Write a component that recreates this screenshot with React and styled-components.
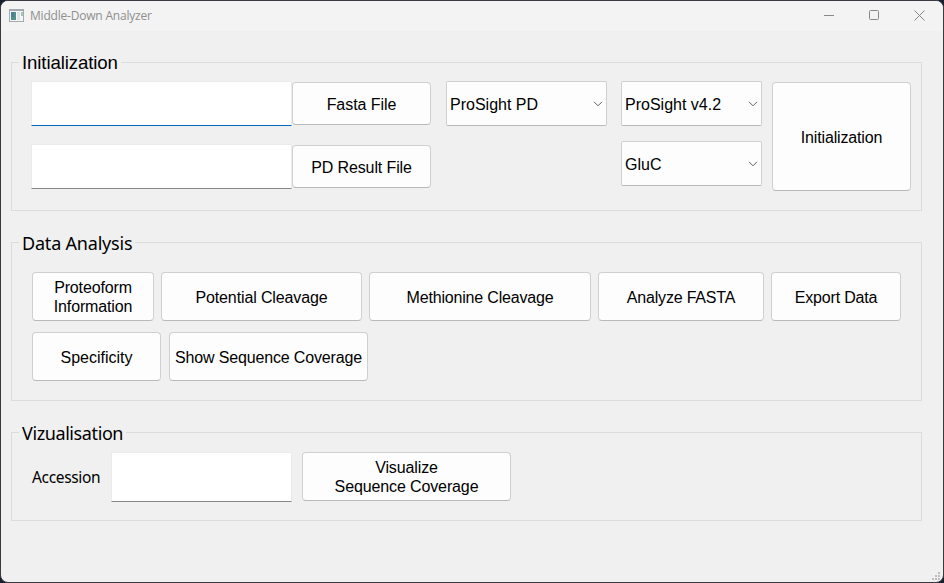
import React from "react";
import styled, { createGlobalStyle } from "styled-components";

const Global = createGlobalStyle`
  * { box-sizing: border-box; }
  body { margin: 0; background: #1c2430; }
`;

const Desktop = styled.div`
  width: 944px;
  height: 583px;
  background: #17202c;
  overflow: hidden;
`;

const Window = styled.main`
  position: relative;
  width: 944px;
  height: 583px;
  border: 1px solid #3a3a40;
  border-radius: 8px;
  overflow: hidden;
  background: #f0f0f0;
  color: #000;
  font: 16px/19px "Liberation Sans", Arial, sans-serif;
`;

const TitleBar = styled.header`
  display: flex;
  align-items: center;
  height: 30px;
  padding: 0 18px 1px 8px;
  background: #f3f3f3;
`;

const WindowTitle = styled.h1`
  flex: 1;
  margin: 1px 0 0 6px;
  font: 400 12px/16px "Open Sans", sans-serif;
  letter-spacing: -0.2px;
  color: #8f8f8f;
`;

const Controls = styled.div`
  display: flex;
  gap: 34px;
`;

const Body = styled.div`
  display: flex;
  flex-direction: column;
  gap: 31px;
  width: 911px;
  margin: 31px 0 0 10px;
`;

const Group = styled.section`
  height: ${(p) => p.$h}px;
  border: 1px solid #dcdcdc;
`;

const GroupTitle = styled.h2`
  width: max-content;
  height: 22px;
  margin: -11px 0 0 7px;
  padding: 0 3px;
  background: #f0f0f0;
  white-space: nowrap;
  font: 400 ${(p) => p.$size}px/22px ${(p) => p.$font}, sans-serif;
  letter-spacing: ${(p) => p.$tracking || 0}px;
`;

const Row = styled.div`
  display: flex;
  align-items: flex-start;
  margin: ${(p) => p.$m};
`;

const Stack = styled.div`
  display: flex;
  flex-direction: column;
  gap: ${(p) => p.$gap}px;
  margin: ${(p) => p.$m};
`;

const Button = styled.button`
  flex: none;
  width: ${(p) => p.$w}px;
  height: ${(p) => p.$h}px;
  margin: 0 0 0 ${(p) => p.$ml || 0}px;
  padding: 1px 0 0;
  border: 1px solid #d0d0d0;
  border-bottom-color: #b9b9b9;
  border-radius: 4px;
  background: #fdfdfd;
  color: #000;
  font: inherit;
  letter-spacing: ${(p) => p.$tracking || 0}px;
  white-space: pre;
`;

const Input = styled.input`
  flex: none;
  width: ${(p) => p.$w}px;
  height: ${(p) => p.$h}px;
  margin: 0 0 0 ${(p) => p.$ml || 0}px;
  border: 1px solid #ebebeb;
  border-bottom-color: ${(p) => (p.$active ? "#0067c0" : "#868686")};
  border-radius: 1px;
  background: #fff;
  outline: none;
`;

const Combo = styled.div`
  display: flex;
  align-items: center;
  justify-content: space-between;
  width: ${(p) => p.$w}px;
  height: 45px;
  padding: 1px 3px 0;
  border: 1px solid #d0d0d0;
  border-bottom-color: #b9b9b9;
  border-radius: 2px;
  background: #fdfdfd;
`;

const Label = styled.label`
  width: 80px;
  margin-top: 14px;
  padding-left: 1px;
  font: 15.5px/22px "Noto Sans", sans-serif;
  letter-spacing: -0.35px;
`;

const Grip = styled.svg`
  position: absolute;
  right: 3px;
  bottom: 2px;
`;

const AppIcon = () => (
  <svg width="15" height="13" viewBox="0 0 15 13" shapeRendering="crispEdges">
    <path d="M0 0h15v13H0z" fill="#a4a9ac" />
    <path d="M1 2h13v10H1z" fill="#f4f6f8" />
    <path d="M2 3h5v8H2z" fill="#4f9385" />
    <path d="M2 3h3v5H2z" fill="#4d7f9c" />
    <path d="M8 3h3v8H8z" fill="#dfe4e6" />
    <path d="M12 3h2v4h-2z" fill="#9cc8b0" />
  </svg>
);

const Select = ({ w, children }) => (
  <Combo $w={w}>
    <span>{children}</span>
    <svg width="10" height="6" viewBox="0 0 10 6">
      <path d="M1 .8l4 4 4-4" fill="none" stroke="#606060" />
    </svg>
  </Combo>
);

export default function App() {
  return (
    <Desktop>
      <Global />
      <Window>
        <TitleBar>
          <AppIcon />
          <WindowTitle>Middle-Down Analyzer</WindowTitle>
          <Controls>
            <svg width="11" height="11"><path d="M0 5.5h10" stroke="#888" /></svg>
            <svg width="11" height="11"><rect x=".5" y=".5" width="9" height="9" rx="1" fill="none" stroke="#888" /></svg>
            <svg width="11" height="11"><path d="M.5.5l10 10m0-10l-10 10" stroke="#888" /></svg>
          </Controls>
        </TitleBar>
        <Body>
          <Group $h={149}>
            <GroupTitle $size={18.67} $tracking={-0.12} $font='"Liberation Sans"'>Initialization</GroupTitle>
            <Row $m="7px 0 0 19px">
              <Stack $gap={18}>
                <Input $w={261} $h={45} $active aria-label="Fasta path" />
                <Input $w={261} $h={45} aria-label="Result path" />
              </Stack>
              <Stack $gap={20} $m="1px 0 0 0">
                <Button $w={139} $h={43} $tracking={-0.05}>Fasta File</Button>
                <Button $w={139} $h={43} $tracking={-0.12}>PD Result File</Button>
              </Stack>
              <Stack $m="0 0 0 15px"><Select w={161}>ProSight PD</Select></Stack>
              <Stack $gap={15} $m="0 0 0 14px">
                <Select w={141}>ProSight v4.2</Select>
                <Select w={141}>GluC</Select>
              </Stack>
              <Stack $m="1px 0 0 10px"><Button $w={139} $h={109} $tracking={-0.15}>Initialization</Button></Stack>
            </Row>
          </Group>
          <Group $h={159}>
            <GroupTitle $size={18} $tracking={-0.2} $font='"Noto Sans"'>Data Analysis</GroupTitle>
            <Row $m="18px 0 0 20px">
              <Button $w={122} $h={49} $tracking={-0.15}>{"Proteoform\nInformation"}</Button>
              <Button $w={201} $h={49} $ml={7} $tracking={-0.12}>Potential Cleavage</Button>
              <Button $w={222} $h={49} $ml={7} $tracking={-0.18}>Methionine Cleavage</Button>
              <Button $w={166} $h={49} $ml={7} $tracking={-0.2}>Analyze FASTA</Button>
              <Button $w={130} $h={49} $ml={7} $tracking={-0.2}>Export Data</Button>
            </Row>
            <Row $m="11px 0 0 20px">
              <Button $w={129} $h={49}>Specificity</Button>
              <Button $w={199} $h={49} $ml={8} $tracking={-0.15}>Show Sequence Coverage</Button>
            </Row>
          </Group>
          <Group $h={89}>
            <GroupTitle $size={18} $tracking={-0.4} $font='"Noto Sans"'>Vizualisation</GroupTitle>
            <Row $m="8px 0 0 19px">
              <Label>Accession</Label>
              <Input $w={181} $h={50} aria-label="Accession" />
              <Button $w={209} $h={49} $ml={10} $tracking={-0.12}>{"Visualize\nSequence Coverage"}</Button>
            </Row>
          </Group>
        </Body>
        <Grip width="8" height="8" fill="#bdbdbd" shapeRendering="crispEdges">
          <path d="M6 0h2v2H6zM3 3h2v2H3zM6 3h2v2H6zM0 6h2v2H0zM3 6h2v2H3zM6 6h2v2H6z" />
        </Grip>
      </Window>
    </Desktop>
  );
}
